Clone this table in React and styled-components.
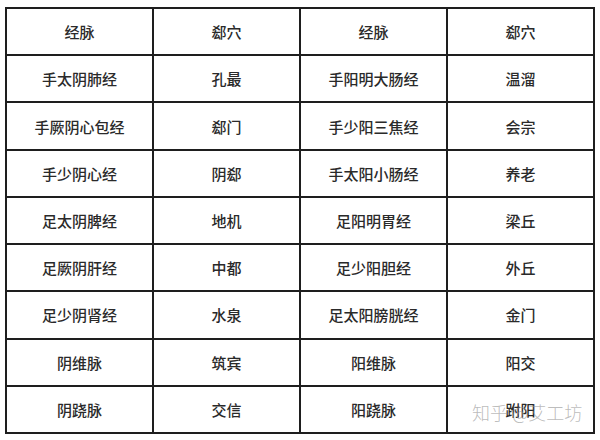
import React from "react";
import styled, { createGlobalStyle } from "styled-components";

const GlobalStyle = createGlobalStyle`
  html, body {
    margin: 0;
    padding: 0;
    background: #fff;
  }
  body {
    font-family: "Noto Sans CJK SC", "Noto Sans", sans-serif;
  }
`;

const rows = [
  ["经脉", "郄穴", "经脉", "郄穴"],
  ["手太阴肺经", "孔最", "手阳明大肠经", "温溜"],
  ["手厥阴心包经", "郄门", "手少阳三焦经", "会宗"],
  ["手少阴心经", "阴郄", "手太阳小肠经", "养老"],
  ["足太阴脾经", "地机", "足阳明胃经", "梁丘"],
  ["足厥阴肝经", "中都", "足少阳胆经", "外丘"],
  ["足少阴肾经", "水泉", "足太阳膀胱经", "金门"],
  ["阴维脉", "筑宾", "阳维脉", "阳交"],
  ["阴跷脉", "交信", "阳跷脉", "跗阳"],
];

const Page = styled.div`
  width: 600px;
  height: 440px;
  padding: 7px 5px 6px 5px;
  box-sizing: border-box;
  position: relative;
`;

const Table = styled.div`
  width: 590px;
  height: 427px;
  box-sizing: border-box;
  display: grid;
  grid-template-columns: repeat(4, 1fr);
  grid-template-rows: repeat(9, 1fr);
  gap: 2px;
  padding: 2px;
  background: #1e1e1e;
`;

const Cell = styled.div`
  background: #fff;
  display: flex;
  align-items: center;
  justify-content: center;
  font-size: 15px;
  font-weight: 500;
  color: #2a2a2a;
`;

const Watermark = styled.div`
  position: absolute;
  left: 472px;
  top: 399px;
  font-size: 18px;
  font-weight: 300;
  color: rgba(150, 150, 150, 0.65);
  white-space: nowrap;
  pointer-events: none;
`;

export default function App() {
  return (
    <>
      <GlobalStyle />
      <Page>
        <Table>
          {rows.map((r, i) =>
            r.map((t, j) => <Cell key={`${i}-${j}`}>{t}</Cell>)
          )}
        </Table>
        <Watermark>知乎 @艾工坊</Watermark>
      </Page>
    </>
  );
}
